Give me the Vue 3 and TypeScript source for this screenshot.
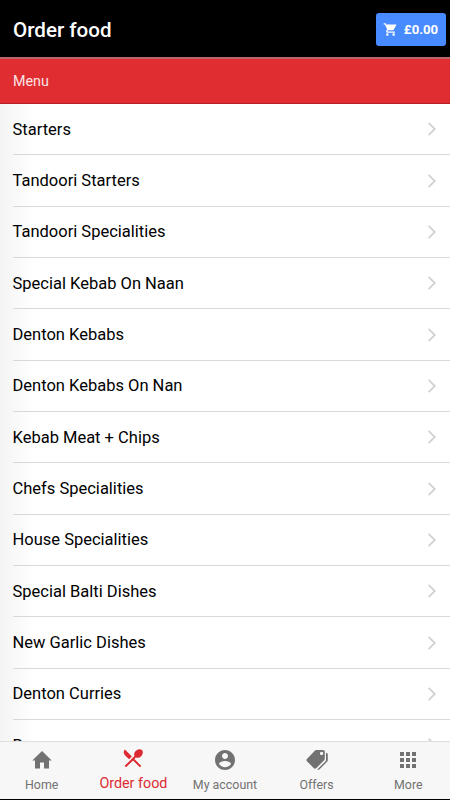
<script setup lang="ts">
const categories: string[] = [
  'Starters', 'Tandoori Starters', 'Tandoori Specialities', 'Special Kebab On Naan',
  'Denton Kebabs', 'Denton Kebabs On Nan', 'Kebab Meat + Chips', 'Chefs Specialities',
  'House Specialities', 'Special Balti Dishes', 'New Garlic Dishes', 'Denton Curries', 'B'
]
interface Tab { label: string; active?: boolean; path: string }
const tabs: Tab[] = [
  { label: 'Home', path: 'M10 20.5v-6h4v6h5v-8h2.7L12 3 2.3 12.5H5v8z' },
  { label: 'Order food', active: true, path: 'M8.1 13.34l2.83-2.83L3.91 3.5c-1.56 1.56-1.56 4.09 0 5.66l4.19 4.18zm6.78-1.81c1.53.71 3.68.21 5.27-1.38 1.91-1.91 2.28-4.65.81-6.12-1.46-1.46-4.2-1.1-6.12.81-1.59 1.59-2.09 3.74-1.38 5.27L3.7 19.87l1.41 1.41L12 14.41l6.88 6.88 1.41-1.41L13.41 13l1.47-1.47z' },
  { label: 'My account', path: 'M12 2C6.48 2 2 6.48 2 12s4.48 10 10 10 10-4.48 10-10S17.52 2 12 2zm0 3c1.66 0 3 1.34 3 3s-1.34 3-3 3-3-1.34-3-3 1.34-3 3-3zm0 14.2c-2.5 0-4.71-1.28-6-3.22.03-1.99 4-3.08 6-3.08s5.97 1.09 6 3.08c-1.29 1.94-3.5 3.22-6 3.22z' },
  { label: 'Offers', path: 'M11.2 2h6.9c1 0 1.7.8 1.7 1.7v6.9c0 .6-.2 1.1-.6 1.6l-8 8c-.6.6-1.6.6-2.3 0l-7-7c-.6-.6-.6-1.6 0-2.3l7.9-8.2c.4-.5.8-.7 1.4-.7zM16.6 3.7a1.7 1.7 0 1 0 0 3.4 1.7 1.7 0 0 0 0-3.4zM21 4.7c.9.1 1.8.8 1.8 1.8V12c0 .7-.2 1.2-.7 1.7l-7.5 7.5c-.6.6-1.5.8-2.3.3l8-8.1c.5-.5.7-1 .7-1.7z' },
  { label: 'More', path: 'M4 8h4V4H4zm6 12h4v-4h-4zm-6 0h4v-4H4zm0-6h4v-4H4zm6 0h4v-4h-4zm6-10v4h4V4zm-6 4h4V4h-4zm6 6h4v-4h-4zm0 6h4v-4h-4z' }
]
</script>

<template>
  <div class="screen">
    <header class="toolbar">
      <h1>Order food</h1>
      <button class="cart">
        <svg viewBox="0 0 24 24"><path d="M7 18c-1.1 0-1.99.9-1.99 2S5.9 22 7 22s2-.9 2-2-.9-2-2-2zM1 2v2h2l3.6 7.59-1.35 2.45C4.52 15.37 5.48 17 7 17h12v-2H7.42c-.14 0-.25-.11-.25-.25L8.1 13h7.45c.75 0 1.41-.41 1.75-1.03L21.7 4H5.21l-.94-2zm16 16c-1.1 0-1.99.9-1.99 2s.89 2 1.99 2 2-.9 2-2-.9-2-2-2z" /></svg>
        <span>£0.00</span>
      </button>
    </header>
    <div class="section">Menu</div>
    <main class="list">
      <div v-for="name in categories" :key="name" class="item">
        <span>{{ name }}</span>
        <svg class="chevron" viewBox="0 0 10 16"><path d="M1.6 1.8 7.8 8l-6.2 6.2" /></svg>
      </div>
    </main>
    <nav class="tabs">
      <div v-for="tab in tabs" :key="tab.label" class="tab" :class="{ active: tab.active }">
        <svg viewBox="0 0 24 24"><path fill-rule="evenodd" :d="tab.path" /></svg>
        <span>{{ tab.label }}</span>
      </div>
    </nav>
  </div>
</template>

<style>
body { margin: 0; background: #000; }
</style>

<style scoped>
.screen {
  width: 450px;
  height: 799px;
  overflow: hidden;
  display: flex;
  flex-direction: column;
  font-family: Roboto, sans-serif;
  background: #fff;
}
.toolbar {
  height: 57px;
  flex: none;
  box-sizing: border-box;
  background: #000;
  display: flex;
  align-items: center;
  justify-content: space-between;
  padding: 1px 4px 0 13px;
}
h1 {
  margin: 0;
  padding-top: 2px;
  color: #fff;
  font-size: 20.6px;
  font-weight: 500;
  line-height: 24px;
}
.cart {
  width: 70px;
  height: 33px;
  padding: 0 1px 0 0;
  border: 0;
  border-radius: 3px;
  background: #488aff;
  color: #fff;
  display: flex;
  align-items: center;
  justify-content: center;
  gap: 6px;
  font: 700 13.2px/15px Roboto, sans-serif;
}
.cart svg { width: 15px; height: 15px; fill: currentColor; }
.section {
  height: 47px;
  flex: none;
  box-sizing: border-box;
  padding: 0 13px;
  border-top: 2px solid #b96668;
  border-bottom: 1px solid #b51f25;
  background: #e02d32;
  color: #fbe4e4;
  font-size: 14.3px;
  line-height: 45px;
}
.list {
  flex: 1;
  min-height: 0;
  overflow: hidden;
  padding-left: 12.5px;
  background: linear-gradient(90deg, #f4f4f4, #fff 35px);
}
.item {
  height: 51.35px;
  box-sizing: border-box;
  border-bottom: 1px solid #d9d9d9;
  display: flex;
  align-items: center;
  justify-content: space-between;
  padding-right: 13px;
  color: #000;
  font-size: 16.5px;
}
.chevron {
  width: 10px;
  height: 16px;
  fill: none;
  stroke: #d2d2d2;
  stroke-width: 1.8;
}
.tabs {
  height: 58px;
  flex: none;
  box-sizing: border-box;
  border-top: 1px solid #dedede;
  background: #f7f7f7;
  display: grid;
  grid-template-columns: 83.4px 100px 83.2px 100px 83.4px;
}
.tab {
  display: flex;
  flex-direction: column;
  align-items: center;
  color: #727272;
  font-size: 12.4px;
  padding-top: 6px;
  gap: 5px;
  line-height: 15px;
  white-space: nowrap;
}
.tab svg { width: 24px; height: 24px; fill: currentColor; }
.tab.active { color: #dc2b33; font-size: 14.3px; padding-top: 4px; gap: 6px; }
</style>
